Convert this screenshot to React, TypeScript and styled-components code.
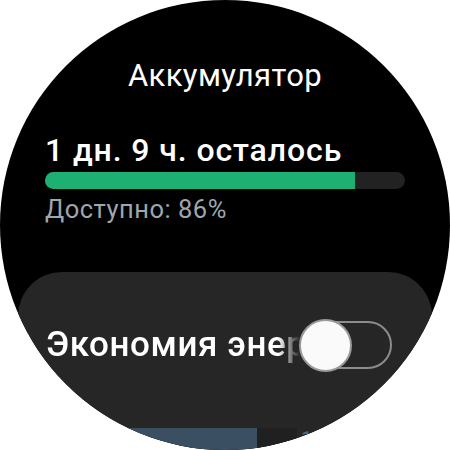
import React from "react"
import styled, { createGlobalStyle } from "styled-components"

const GlobalStyle = createGlobalStyle`
  html, body {
    margin: 0;
    padding: 0;
    background: #ffffff;
  }
  * {
    box-sizing: border-box;
  }
`

const Watch = styled.div`
  width: 450px;
  height: 450px;
  border-radius: 50%;
  overflow: hidden;
  background: #000000;
  display: flex;
  flex-direction: column;
  font-family: Roboto, "Noto Sans", "Liberation Sans", sans-serif;
  color: #ffffff;
`

const Title = styled.h1`
  margin: 58px 0 0 0;
  font-size: 31px;
  line-height: 36px;
  font-weight: 400;
  letter-spacing: 0.4px;
  text-align: center;
`

const Summary = styled.div`
  display: flex;
  flex-direction: column;
  padding: 0 45px;
  margin-top: 37px;
`

const Remaining = styled.div`
  font-size: 32px;
  line-height: 38px;
  font-weight: 500;
  letter-spacing: 0.9px;
`

const Track = styled.div`
  height: 17px;
  margin-top: 3px;
  border-radius: 9px;
  background: #222222;
  overflow: hidden;
`

const Fill = styled.div`
  height: 100%;
  background: #1db073;
`

const Available = styled.div`
  margin-top: 5px;
  font-size: 25.5px;
  line-height: 30px;
  letter-spacing: 0.5px;
  color: #9ea6ae;
`

const Card = styled.div`
  flex: 1;
  margin: 48px 18px 0 18px;
  padding: 49px 40px 0 28px;
  border-radius: 44px 44px 0 0;
  background: #262626;
  display: flex;
  flex-direction: column;
`

const SettingRow = styled.div`
  display: flex;
  align-items: center;
  height: 48px;
`

const SettingLabel = styled.div`
  flex: 1;
  min-width: 0;
  white-space: nowrap;
  overflow: hidden;
  font-size: 35px;
  line-height: 48px;
  font-weight: 500;
  letter-spacing: 0.6px;
  -webkit-mask-image: linear-gradient(to right, #000 calc(100% - 22px), transparent);
  mask-image: linear-gradient(to right, #000 calc(100% - 22px), transparent);
`

const Toggle = styled.div`
  position: relative;
  width: 92px;
  height: 48px;
  flex-shrink: 0;
  border: 2px solid #8c8c8c;
  border-radius: 24px;
`

const Thumb = styled.div`
  position: absolute;
  left: -3px;
  top: -4px;
  width: 53px;
  height: 53px;
  border-radius: 50%;
  background: #fafafa;
  border: 2px solid #9a9a9a;
`

const UsageRow = styled.div`
  display: flex;
  align-items: flex-start;
  margin-top: 59px;
  height: 30px;
`

const UsageBar = styled.div<{ $width: number; $color: string }>`
  width: ${(p) => p.$width}px;
  height: 100%;
  background: ${(p) => p.$color};
`

const UsageLabel = styled.div`
  margin-left: 4px;
  font-size: 20px;
  line-height: 22px;
  color: #4d6d8f;
`

export default function App() {
  const level = 86
  return (
    <>
      <GlobalStyle />
      <Watch>
        <Title>Аккумулятор</Title>
        <Summary>
          <Remaining>1 дн. 9 ч. осталось</Remaining>
          <Track>
            <Fill style={{ width: `${level}%` }} />
          </Track>
          <Available>Доступно: {level}%</Available>
        </Summary>
        <Card>
          <SettingRow>
            <SettingLabel>Экономия энергии</SettingLabel>
            <Toggle>
              <Thumb />
            </Toggle>
          </SettingRow>
          <UsageRow>
            <UsageBar $width={211} $color="#3b4f63" />
            <UsageBar $width={40} $color="#202020" />
            <UsageLabel>1</UsageLabel>
          </UsageRow>
        </Card>
      </Watch>
    </>
  )
}
